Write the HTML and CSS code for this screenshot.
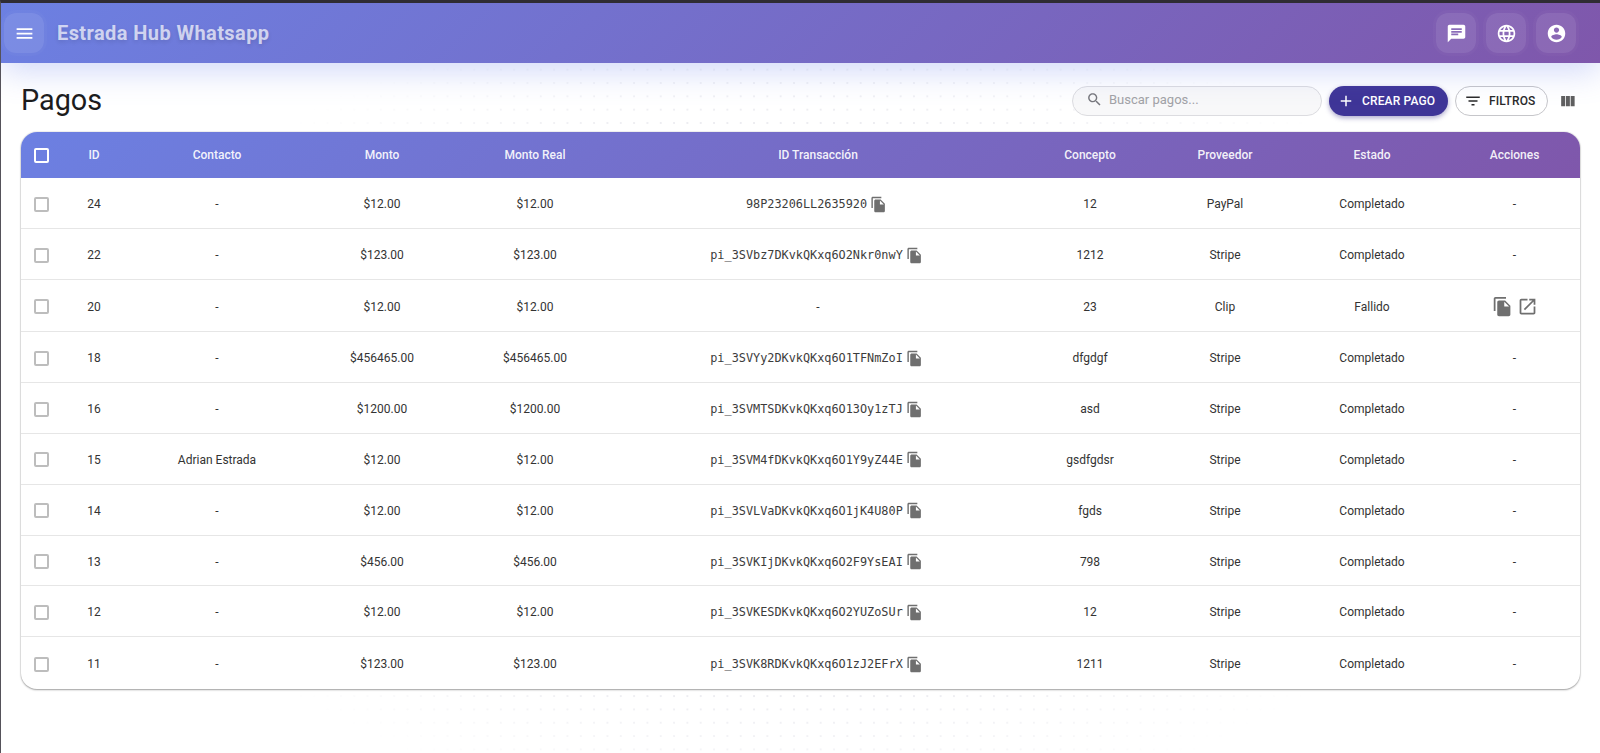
FILE: index.html
```html
<!DOCTYPE html>
<html lang="es">
<head>
<meta charset="utf-8">
<title>Pagos</title>
<link rel="stylesheet" href="styles.css">
</head>
<body>
<svg class="sprite" aria-hidden="true">
  <symbol id="i-menu" viewBox="0 0 24 24"><path d="M3 18h18v-2H3v2zm0-5h18v-2H3v2zm0-7v2h18V6H3z"/></symbol>
  <symbol id="i-chat" viewBox="0 0 24 24"><path d="M20 2H4c-1.1 0-1.99.9-1.99 2L2 22l4-4h14c1.1 0 2-.9 2-2V4c0-1.1-.9-2-2-2zM6 9h12v2H6V9zm8 5H6v-2h8v2zm4-6H6V6h12v2z"/></symbol>
  <symbol id="i-lang" viewBox="0 0 24 24"><path d="M11.99 2C6.47 2 2 6.48 2 12s4.47 10 9.99 10C17.52 22 22 17.52 22 12S17.52 2 11.99 2zm6.93 6h-2.95c-.32-1.25-.78-2.45-1.38-3.56 1.84.63 3.37 1.91 4.33 3.56zM12 4.04c.83 1.2 1.48 2.53 1.91 3.96h-3.82c.43-1.43 1.08-2.76 1.91-3.96zM4.26 14C4.1 13.36 4 12.69 4 12s.1-1.36.26-2h3.38c-.08.66-.14 1.32-.14 2 0 .68.06 1.34.14 2H4.26zm.82 2h2.95c.32 1.25.78 2.45 1.38 3.56-1.84-.63-3.37-1.9-4.33-3.56zm2.95-8H5.08c.96-1.66 2.49-2.93 4.33-3.56C8.81 5.55 8.35 6.75 8.03 8zM12 19.96c-.83-1.2-1.48-2.53-1.91-3.96h3.82c-.43 1.43-1.08 2.76-1.91 3.96zM14.34 14H9.66c-.09-.66-.16-1.32-.16-2 0-.68.07-1.35.16-2h4.68c.09.65.16 1.32.16 2 0 .68-.07 1.34-.16 2zm.25 5.56c.6-1.11 1.06-2.31 1.38-3.56h2.95c-.96 1.65-2.49 2.93-4.33 3.56zM16.36 14c.08-.66.14-1.32.14-2 0-.68-.06-1.34-.14-2h3.38c.16.64.26 1.31.26 2s-.1 1.36-.26 2h-3.38z"/></symbol>
  <symbol id="i-account" viewBox="0 0 24 24"><path d="M12 2C6.48 2 2 6.48 2 12s4.48 10 10 10 10-4.48 10-10S17.52 2 12 2zm0 3c1.66 0 3 1.34 3 3s-1.34 3-3 3-3-1.34-3-3 1.34-3 3-3zm0 14.2c-2.5 0-4.71-1.28-6-3.22.03-1.99 4-3.08 6-3.08 1.99 0 5.97 1.09 6 3.08-1.29 1.94-3.5 3.22-6 3.22z"/></symbol>
  <symbol id="i-search" viewBox="0 0 24 24"><path d="M15.5 14h-.79l-.28-.27C15.41 12.59 16 11.11 16 9.5 16 5.91 13.09 3 9.5 3S3 5.91 3 9.5 5.91 16 9.5 16c1.61 0 3.09-.59 4.23-1.57l.27.28v.79l5 4.99L20.49 19l-4.99-5zm-6 0C7.01 14 5 11.99 5 9.5S7.01 5 9.5 5 14 7.01 14 9.5 11.99 14 9.5 14z"/></symbol>
  <symbol id="i-add" viewBox="0 0 24 24"><path d="M19 13h-6v6h-2v-6H5v-2h6V5h2v6h6v2z"/></symbol>
  <symbol id="i-filter" viewBox="0 0 24 24"><path d="M10 18h4v-2h-4v2zM3 6v2h18V6H3zm3 7h12v-2H6v2z"/></symbol>
  <symbol id="i-columns" viewBox="0 0 24 24"><path d="M10 18h5V5h-5v13zm-6 0h5V5H4v13zM16 5v13h5V5h-5z"/></symbol>
  <symbol id="i-copy" viewBox="0 0 24 24"><path d="M16 1H4c-1.1 0-2 .9-2 2v14h2V3h12V1zm-1 4l6 6v10c0 1.1-.9 2-2 2H7.99C6.89 23 6 22.1 6 21l.01-14c0-1.1.89-2 1.99-2h7zm-1 7h5.5L14 6.5V12z"/></symbol>
  <symbol id="i-open" viewBox="0 0 24 24"><path d="M19 19H5V5h7V3H5c-1.11 0-2 .9-2 2v14c0 1.1.89 2 2 2h14c1.1 0 2-.9 2-2v-7h-2v7zM14 3v2h3.59l-9.83 9.83 1.41 1.41L19 6.41V10h2V3h-7z"/></symbol>
</svg>

<header class="appbar">
  <button class="glass-btn menu-btn" type="button"><svg class="icon-bar"><use href="#i-menu"/></svg></button>
  <div class="brand">Estrada Hub Whatsapp</div>
  <div class="appbar-actions">
    <button class="glass-btn" type="button"><svg class="icon-bar"><use href="#i-chat"/></svg></button>
    <button class="glass-btn" type="button"><svg class="icon-bar"><use href="#i-lang"/></svg></button>
    <button class="glass-btn" type="button"><svg class="icon-bar"><use href="#i-account"/></svg></button>
  </div>
</header>

<main class="page">
  <div class="toolbar">
    <h1 class="page-title">Pagos</h1>
    <div class="tools">
      <div class="search">
        <svg class="icon-search"><use href="#i-search"/></svg>
        <span class="search-text">Buscar pagos...</span>
      </div>
      <button class="btn btn-primary" type="button"><svg class="icon-btn"><use href="#i-add"/></svg>Crear pago</button>
      <button class="btn btn-outline" type="button"><svg class="icon-btn"><use href="#i-filter"/></svg>Filtros</button>
      <svg class="icon-columns"><use href="#i-columns"/></svg>
    </div>
  </div>

  <section class="card">
    <table class="grid">
      <colgroup>
        <col class="c-check"><col class="c-id"><col class="c-contact"><col class="c-amount"><col class="c-real"><col class="c-tx"><col class="c-concept"><col class="c-provider"><col class="c-state"><col class="c-actions">
      </colgroup>
      <thead>
        <tr>
          <th><span class="check check-head"></span></th>
          <th>ID</th><th>Contacto</th><th>Monto</th><th>Monto Real</th><th>ID Transacción</th><th>Concepto</th><th>Proveedor</th><th>Estado</th><th>Acciones</th>
        </tr>
      </thead>
      <tbody>
        <tr><td><span class="check"></span></td><td>24</td><td>-</td><td>$12.00</td><td>$12.00</td><td><span class="tx"><span class="mono">98P23206LL2635920</span><svg class="icon-copy"><use href="#i-copy"/></svg></span></td><td>12</td><td>PayPal</td><td>Completado</td><td>-</td></tr>
        <tr><td><span class="check"></span></td><td>22</td><td>-</td><td>$123.00</td><td>$123.00</td><td><span class="tx"><span class="mono">pi_3SVbz7DKvkQKxq6O2Nkr0nwY</span><svg class="icon-copy"><use href="#i-copy"/></svg></span></td><td>1212</td><td>Stripe</td><td>Completado</td><td>-</td></tr>
        <tr class="row-tall"><td><span class="check"></span></td><td>20</td><td>-</td><td>$12.00</td><td>$12.00</td><td>-</td><td>23</td><td>Clip</td><td>Fallido</td><td><span class="row-actions"><svg class="icon-action"><use href="#i-copy"/></svg><svg class="icon-action"><use href="#i-open"/></svg></span></td></tr>
        <tr><td><span class="check"></span></td><td>18</td><td>-</td><td>$456465.00</td><td>$456465.00</td><td><span class="tx"><span class="mono">pi_3SVYy2DKvkQKxq6O1TFNmZoI</span><svg class="icon-copy"><use href="#i-copy"/></svg></span></td><td>dfgdgf</td><td>Stripe</td><td>Completado</td><td>-</td></tr>
        <tr><td><span class="check"></span></td><td>16</td><td>-</td><td>$1200.00</td><td>$1200.00</td><td><span class="tx"><span class="mono">pi_3SVMTSDKvkQKxq6O13Oy1zTJ</span><svg class="icon-copy"><use href="#i-copy"/></svg></span></td><td>asd</td><td>Stripe</td><td>Completado</td><td>-</td></tr>
        <tr><td><span class="check"></span></td><td>15</td><td>Adrian Estrada</td><td>$12.00</td><td>$12.00</td><td><span class="tx"><span class="mono">pi_3SVM4fDKvkQKxq6O1Y9yZ44E</span><svg class="icon-copy"><use href="#i-copy"/></svg></span></td><td>gsdfgdsr</td><td>Stripe</td><td>Completado</td><td>-</td></tr>
        <tr><td><span class="check"></span></td><td>14</td><td>-</td><td>$12.00</td><td>$12.00</td><td><span class="tx"><span class="mono">pi_3SVLVaDKvkQKxq6O1jK4U80P</span><svg class="icon-copy"><use href="#i-copy"/></svg></span></td><td>fgds</td><td>Stripe</td><td>Completado</td><td>-</td></tr>
        <tr><td><span class="check"></span></td><td>13</td><td>-</td><td>$456.00</td><td>$456.00</td><td><span class="tx"><span class="mono">pi_3SVKIjDKvkQKxq6O2F9YsEAI</span><svg class="icon-copy"><use href="#i-copy"/></svg></span></td><td>798</td><td>Stripe</td><td>Completado</td><td>-</td></tr>
        <tr><td><span class="check"></span></td><td>12</td><td>-</td><td>$12.00</td><td>$12.00</td><td><span class="tx"><span class="mono">pi_3SVKESDKvkQKxq6O2YUZoSUr</span><svg class="icon-copy"><use href="#i-copy"/></svg></span></td><td>12</td><td>Stripe</td><td>Completado</td><td>-</td></tr>
        <tr><td><span class="check"></span></td><td>11</td><td>-</td><td>$123.00</td><td>$123.00</td><td><span class="tx"><span class="mono">pi_3SVK8RDKvkQKxq6O1zJ2EFrX</span><svg class="icon-copy"><use href="#i-copy"/></svg></span></td><td>1211</td><td>Stripe</td><td>Completado</td><td>-</td></tr>
      </tbody>
    </table>
  </section>
</main>
</body>
</html>
```

FILE: styles.css
```css
* { box-sizing: border-box; }

html, body { height: 100%; }

body {
  margin: 0;
  overflow: hidden;
  background: #fff;
  border-top: 3px solid #2f2c33;
  border-left: 1px solid #55525a;
  font-family: Roboto, "Liberation Sans", sans-serif;
  color: #212121;
  display: flex;
  flex-direction: column;
}

.sprite { display: none; }

button { font-family: inherit; border: 0; padding: 0; cursor: pointer; }

svg { fill: currentColor; display: block; flex: none; }

.appbar {
  position: relative;
  z-index: 1;
  flex: none;
  height: 60px;
  display: flex;
  align-items: center;
  padding: 0 24px 0 3px;
  background: linear-gradient(135deg, #6c80e2 0%, #7f57ab 100%);
  box-shadow: 0 8px 32px rgba(102, 126, 234, 0.3);
  color: #fff;
}

.glass-btn {
  width: 40px;
  height: 40px;
  border-radius: 12px;
  display: flex;
  align-items: center;
  justify-content: center;
  color: #fff;
  background: rgba(255, 255, 255, 0.1);
  box-shadow: 0 0 0 3px rgba(255, 255, 255, 0.025);
}

.icon-bar { width: 21px; height: 21px; }

.brand {
  margin-left: 13px;
  font-size: 20px;
  font-weight: 700;
  letter-spacing: 0.42px;
  color: rgba(255, 255, 255, 0.7);
  text-shadow: 0 2px 4px rgba(0, 0, 0, 0.12);
}

.appbar-actions {
  margin-left: auto;
  display: flex;
  gap: 10px;
}

.page {
  position: relative;
  flex: 1;
  padding: 0 20px 0 20px;
}

.page::before {
  content: "";
  position: absolute;
  left: 0;
  top: 0;
  width: 100%;
  height: 100%;
  background-image: radial-gradient(circle, rgba(90, 90, 130, 0.18) 0.8px, transparent 1.1px);
  background-size: 13.33px 13.33px;
  -webkit-mask-image: radial-gradient(ellipse 700px 420px at 50% 50%, #000 50%, transparent 100%);
  mask-image: radial-gradient(ellipse 700px 420px at 50% 50%, #000 50%, transparent 100%);
}

.toolbar {
  position: relative;
  height: 69px;
  padding-top: 23px;
  display: flex;
  justify-content: space-between;
  align-items: flex-start;
}

.page-title {
  margin: -1px 0 0;
  font-size: 28.8px;
  font-weight: 400;
  line-height: 30px;
  color: #1c1c1c;
}

.tools {
  display: flex;
  align-items: center;
  height: 30px;
}

.search {
  width: 250px;
  height: 30px;
  display: flex;
  align-items: center;
  padding: 0 0 3px 13px;
  border: 1px solid #dcdce0;
  border-radius: 15px;
  background: #f8f8f9;
  font-size: 13px;
  color: #a2a2a6;
}

.icon-search { width: 17px; height: 17px; color: #77777c; margin-right: 6px; }

.btn {
  height: 30px;
  border-radius: 15px;
  display: flex;
  align-items: center;
  padding-bottom: 1px;
  font-size: 12px;
  font-weight: 500;
  letter-spacing: 0.15px;
  text-transform: uppercase;
}

.icon-btn { width: 18px; height: 18px; margin-right: 7px; }

.btn-primary {
  margin-left: 7px;
  width: 119px;
  padding-left: 8px;
  color: #fff;
  background: #3f3597;
  box-shadow: 0 2px 5px rgba(50, 40, 130, 0.4);
}

.btn-outline {
  margin-left: 7px;
  width: 93px;
  padding-left: 8px;
  color: #2a2a2a;
  background: #fff;
  border: 1px solid #c6c6ca;
}

.icon-columns { width: 19px; height: 19px; margin-left: 10px; margin-right: 3px; color: #5f5f5f; }

.card {
  position: relative;
  border-radius: 16px;
  overflow: hidden;
  background: #fff;
  box-shadow: 0 1px 2px rgba(0, 0, 0, 0.35), 0 0 0 1px rgba(0, 0, 0, 0.05);
}

.grid {
  width: 100%;
  table-layout: fixed;
  border-collapse: separate;
  border-spacing: 0;
  font-size: 12px;
  text-align: center;
}

.c-check { width: 41px; }
.c-id { width: 64px; }
.c-contact { width: 182px; }
.c-amount { width: 148px; }
.c-real { width: 158px; }
.c-tx { width: 408px; }
.c-concept { width: 136px; }
.c-provider { width: 134px; }
.c-state { width: 160px; }

.grid thead { background: linear-gradient(135deg, #6c80e2 0%, #7f57ab 100%); }

.grid th {
  height: 46.4px;
  padding: 0;
  font-weight: 500;
  color: rgba(255, 255, 255, 0.92);
}

.grid th:last-child,
.grid td:last-child { padding-right: 3px; }

.grid td {
  height: 50.83px;
  padding: 2px 0 0;
  color: #333;
  border-bottom: 1px solid #e6e6e6;
}

.grid .row-tall td { height: 52.3px; }

.grid tbody tr:last-child td { border-bottom: 0; height: 51.5px; }

.check {
  display: block;
  width: 15px;
  height: 15px;
  margin: 0 auto;
  border: 2px solid #bdbdbd;
  border-radius: 2px;
}

.check-head { border-color: #fff; }

.tx {
  display: inline-flex;
  align-items: center;
  vertical-align: middle;
  padding-right: 3px;
}

.mono {
  font-family: "DejaVu Sans Mono", "Liberation Mono", monospace;
  font-size: 11.85px;
  color: #3c3c3c;
}

.icon-copy { width: 17px; height: 17px; margin-left: 3px; color: #6f6f6f; }

.row-actions {
  display: inline-flex;
  align-items: center;
  gap: 4px;
  vertical-align: middle;
}

.icon-action { width: 21px; height: 21px; color: #6f6f6f; }
```
